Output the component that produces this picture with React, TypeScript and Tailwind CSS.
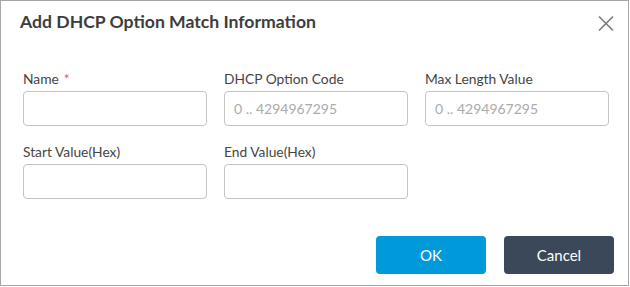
import React from 'react';

const fieldRows = [
  [
    { label: 'Name', required: true, placeholder: '' },
    { label: 'DHCP Option Code', placeholder: '0 .. 4294967295' },
    { label: 'Max Length Value', placeholder: '0 .. 4294967295' },
  ],
  [
    { label: 'Start Value(Hex)', placeholder: '' },
    { label: 'End Value(Hex)', placeholder: '' },
  ],
];

const Field: React.FC<{ label: string; required?: boolean; placeholder: string }> = ({
  label,
  required,
  placeholder,
}) => (
  <div className="flex flex-col">
    <label className="text-[13.8px] leading-[20px] text-[#444] h-[20px]">
      {label}
      {required && <span className="text-[#f0506e] ml-[5px]">*</span>}
    </label>
    <input
      type="text"
      placeholder={placeholder}
      className="mt-[2px] w-[184px] h-[35px] rounded-[4px] border border-[#c4c4c4] bg-white px-[9px] text-[14px] text-[#333] placeholder:text-[#ababab] outline-none"
    />
  </div>
);

export default function App() {
  return (
    <div
      className="w-[629px] h-[286px] border border-[#a6a6a6] bg-white flex flex-col"
      style={{ fontFamily: 'Lato, "Open Sans", sans-serif' }}
    >
      {/* Header */}
      <div className="flex items-start justify-between pl-[19px] pr-[14px] pt-[9px]">
        <h2 className="text-[17.6px] leading-[24px] font-bold text-[#3d3d3d]">
          Add DHCP Option Match Information
        </h2>
        <button type="button" className="mt-[5px] w-[16px] h-[17px] text-[#7a7a7a]">
          <svg viewBox="0 0 16 17" width="16" height="17" fill="none" stroke="currentColor" strokeWidth="1.6">
            <path d="M1 1.5L15 15.5M15 1.5L1 15.5" />
          </svg>
        </button>
      </div>

      {/* Form */}
      <div className="flex flex-col gap-[16px] pl-[22px] pt-[35px]">
        {fieldRows.map((row, i) => (
          <div key={i} className="flex gap-[17px]">
            {row.map((f) => (
              <Field key={f.label} {...f} />
            ))}
          </div>
        ))}
      </div>

      {/* Footer */}
      <div className="flex justify-end gap-[18px] pr-[14px] mt-[37px]">
        <button
          type="button"
          className="w-[110px] h-[38px] rounded-[4px] bg-[#0099da] text-white text-[15px]"
        >
          OK
        </button>
        <button
          type="button"
          className="w-[110px] h-[38px] rounded-[4px] bg-[#3b4859] text-white text-[15px]"
        >
          Cancel
        </button>
      </div>
    </div>
  );
}
